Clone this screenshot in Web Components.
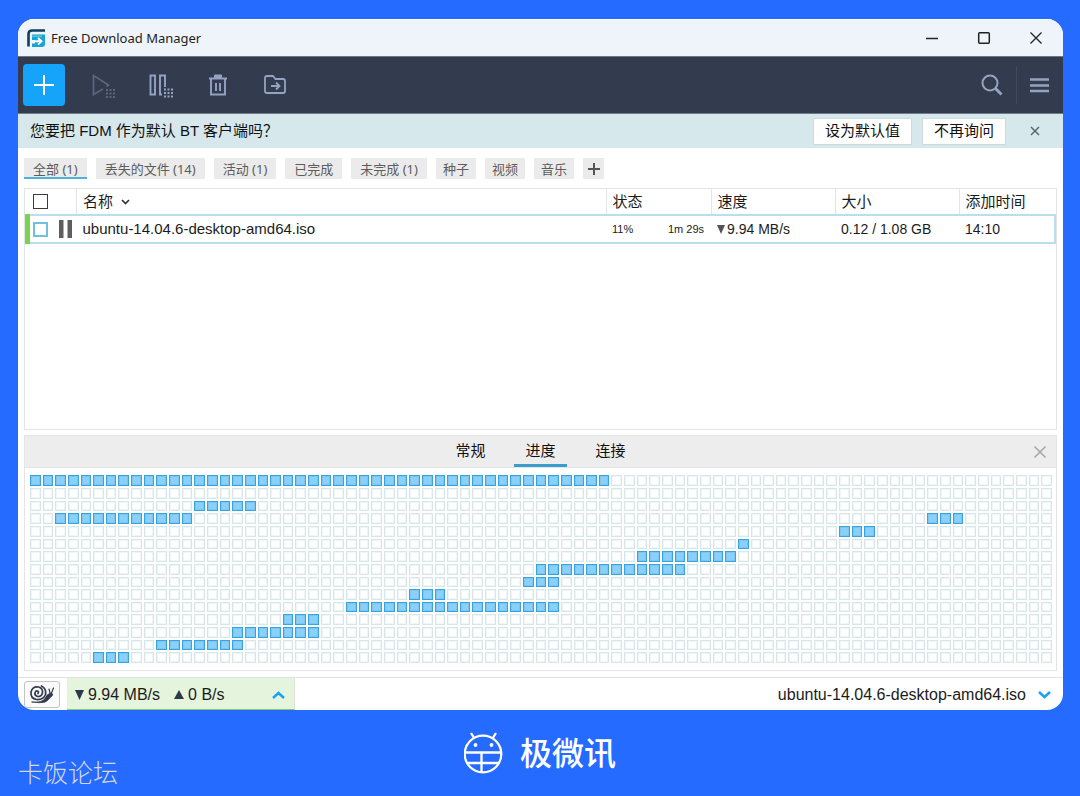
<!DOCTYPE html>
<html lang="zh-CN">
<head>
<meta charset="utf-8">
<meta name="viewport" content="width=device-width, initial-scale=1">
<title>Free Download Manager</title>
<style>
  html, body { margin: 0; }
  body {
    min-height: 100vh; display: flex; flex-direction: column;
    background: #256bff; color: #1c1c1c;
    font: 15px/20px "Liberation Sans", "Noto Sans CJK SC", sans-serif;
    --navy: #333b4e; --icon: #93a3c1; --accent: #16a4fa; --line: #e2e4e5; --sky: #b9dfee;
  }
</style>
</head>
<body>
<fdm-window>
  <fdm-titlebar>Free Download Manager</fdm-titlebar>
  <fdm-toolbar></fdm-toolbar>
  <fdm-banner>您要把 FDM 作为默认 BT 客户端吗？</fdm-banner>
  <fdm-filters></fdm-filters>
  <fdm-downloads></fdm-downloads>
  <fdm-details><fdm-pieces></fdm-pieces></fdm-details>
  <fdm-statusbar>ubuntu-14.04.6-desktop-amd64.iso</fdm-statusbar>
</fdm-window>
<brand-footer></brand-footer>

<script>
const base = `
  :host, *, ::slotted(*) { box-sizing: border-box; }
  button { font: inherit; color: inherit; border: 0; background: none; padding: 0; margin: 0; }
  button { display: inline-flex; align-items: center; justify-content: center; }
  svg { display: block; flex: none; }
`;
function define(name, html, setup) {
  const template = document.createElement('template');
  template.innerHTML = html.replace('<style>', '<style>' + base);
  customElements.define(name, class extends HTMLElement {
    constructor() {
      super();
      this.attachShadow({ mode: 'open' }).append(template.content.cloneNode(true));
      if (setup) setup(this.shadowRoot);
    }
  });
}

define('fdm-window', `
<style>
  :host { display: flex; flex-direction: column; flex: 1; margin: 19px 17px 0 18px;
    border-radius: 16px; overflow: hidden; background: #fff; }
</style><slot></slot>`);

define('fdm-titlebar', `
<style>
  :host { display: flex; align-items: center; height: 37px; padding: 0 19px 0 9px; background: #eff4fa;
    border-top: 1px solid #fff; font-family: "Noto Sans", "Noto Sans CJK SC", sans-serif; color: #222; }
  .name { margin-left: 5px; flex: 1; font-size: 13px; }
  .controls { display: flex; gap: 36px; }
  button { width: 16px; height: 16px; }
</style>
<svg width="19" height="19" viewBox="0 0 19 19" aria-hidden="true">
  <path d="M1.500 17.500V5Q1.500 1.500 5 1.500H18" fill="none" stroke="#123e5e" stroke-width="2.600"/>
  <path d="M5 5.500h13V15q0 3-3 3H5v-3.500h3V11H5z" fill="#18a4d3"/>
  <path d="M5 7.200h10" stroke="#7fd4ec" stroke-width="1"/>
  <path d="M6 12.300h8M11 9l3.500 3.300L11 15.600" fill="none" stroke="#fff" stroke-width="1.900"/>
</svg>
<span class="name"><slot></slot></span>
<div class="controls">
  <button aria-label="最小化"><svg width="14" height="14" viewBox="0 0 14 14"><path d="M1 7.500h12" stroke="#222" stroke-width="1.500"/></svg></button>
  <button aria-label="最大化"><svg width="14" height="14" viewBox="0 0 14 14"><rect x="1.700" y="1.700" width="10.600" height="10.600" rx="1" fill="none" stroke="#222" stroke-width="1.500"/></svg></button>
  <button aria-label="关闭"><svg width="14" height="14" viewBox="0 0 14 14"><path d="M1.500 1.500l11 11M12.500 1.500l-11 11" stroke="#222" stroke-width="1.300"/></svg></button>
</div>`);

define('fdm-toolbar', `
<style>
  :host { display: flex; align-items: center; height: 58px; padding: 0 9px 0 5px; background: var(--navy); color: var(--icon);
    border-top: 1px solid #6f7786; border-bottom: 1px solid #6f7a8b; }
  .add { width: 42px; height: 42px; border-radius: 4px; background: var(--accent); }
  .actions { display: flex; gap: 29px; margin-left: 25px; flex: 1; }
  .actions button, .end button { width: 28px; height: 28px; }
  .end { display: flex; align-items: center; }
  .rule { width: 1px; height: 38px; margin: 0 9px 0 10px; background: #3e4a60; }
</style>
<button class="add" aria-label="添加下载"><svg width="22" height="22" viewBox="0 0 22 22"><path d="M11 1v20M1 11h20" stroke="#fff" stroke-width="2"/></svg></button>
<div class="actions">
  <button aria-label="开始"><svg width="26" height="28" viewBox="0 0 26 28" opacity=".42">
    <path d="M12 18L2.500 23.500v-19L17.500 14l-2 1.500" fill="none" stroke="currentColor" stroke-width="1.700"/>
    <path d="M15 19h10M15 22.500h10M15 26h10" stroke="currentColor" stroke-width="2" stroke-dasharray="2 1.500"/></svg></button>
  <button aria-label="暂停"><svg width="26" height="28" viewBox="0 0 26 28">
    <path d="M2.500 4.500h4.500v19H2.500zM14 23.500h-2V4.500h5V16" fill="none" stroke="currentColor" stroke-width="1.900"/>
    <path d="M16 18.500h10M16 22h10M16 25.500h10" stroke="currentColor" stroke-width="2" stroke-dasharray="2 1.500"/></svg></button>
  <button aria-label="删除"><svg width="22" height="24" viewBox="0 0 22 24" fill="none" stroke="currentColor" stroke-width="1.900">
    <path d="M2 5.500h18M4 5.500V21.500h14V5.500M9 10v8M13 10v8"/><path d="M7.500 4.500V2h7v2.500z" fill="currentColor" stroke-width="1"/></svg></button>
  <button aria-label="移动到"><svg width="24" height="22" viewBox="0 0 24 22" fill="none" stroke="currentColor" stroke-width="1.800">
    <path d="M4 2h6l2.500 3H20q2 0 2 2v10q0 2-2 2H4q-2 0-2-2V4q0-2 2-2zM8 12h8M13 8.500l3.500 3.500-3.500 3.500"/></svg></button>
</div>
<div class="end">
  <button aria-label="搜索"><svg width="24" height="24" viewBox="0 0 24 24" fill="none" stroke="currentColor"><circle cx="10" cy="10" r="7.500" stroke-width="2"/><path d="M15.500 15.500l6 6" stroke-width="3"/></svg></button>
  <span class="rule"></span>
  <button aria-label="菜单"><svg width="20" height="16" viewBox="0 0 20 16"><path d="M0 2.500h19M0 8.500h19M0 14h19" stroke="currentColor" stroke-width="2.400"/></svg></button>
</div>`);

define('fdm-banner', `
<style>
  :host { display: flex; align-items: center; gap: 12px; min-height: 34px; padding: 0 20px 0 12px; background: #d6e8ec; color: #111; }
  .text { flex: 1; }
  .action { height: 25px; padding: 0 11px; background: #fff; box-shadow: 0 0 0 1px #cbdbde; }
  .close { width: 16px; height: 16px; margin-left: 10px; }
</style>
<span class="text"><slot></slot></span>
<button class="action">设为默认值</button>
<button class="action">不再询问</button>
<button class="close" aria-label="关闭提示"><svg width="10" height="10" viewBox="0 0 10 10"><path d="M1 1l8 8M9 1L1 9" stroke="#5b6468" stroke-width="1.500"/></svg></button>`);

define('fdm-filters', `
<style>
  :host { display: flex; gap: 9px; padding: 10px 6px 9px; color: #5c5c5c;
    font-family: "Noto Sans", "Noto Sans CJK SC", sans-serif; font-size: 13px; line-height: 18px; }
  button { height: 21px; padding: 0 9px; background: #ebebeb; }
  .kind { padding: 0 7px; }
  .on { border-bottom: 2px solid #4fb2dc; padding-top: 2px; }
  .add { width: 21px; padding: 0; }
</style>
<button class="on">全部 (1)</button><button>丢失的文件 (14)</button><button>活动 (1)</button><button>已完成</button><button>未完成 (1)</button>
<button class="kind">种子</button><button class="kind">视频</button><button class="kind">音乐</button>
<button class="add" aria-label="添加标签"><svg width="12" height="12" viewBox="0 0 12 12"><path d="M6 0v12M0 6h12" stroke="#555" stroke-width="2"/></svg></button>`);

define('fdm-downloads', `
<style>
  :host { display: block; flex: 1; margin: 0 6px 5px; border: 1px solid var(--line); }
  table { width: 100%; border-collapse: collapse; table-layout: fixed; }
  th, td { padding: 0 0 0 6px; font-weight: 400; text-align: left; white-space: nowrap; }
  th { height: 26px; border-left: 1px solid var(--line); }
  .pick { width: 49px; } .status { width: 105px; } .speed { width: 124px; } .size { width: 124px; } .added { width: 96px; }
  td { height: 28px; font-size: 14px; border-top: 2px solid var(--sky); border-bottom: 2px solid var(--sky); }
  td:last-child { border-right: 2px solid var(--sky); }
  td:first-child { border-left: 5px solid #79d254; padding-left: 3px; }
  th:first-child { border-left: 0; padding-left: 5px; }
  .name { font-size: 15px; }
  .cell { display: flex; align-items: center; }
  .small { font-size: 11px; justify-content: space-between; padding-right: 7px; }
  input { appearance: none; width: 15px; height: 15px; margin: 0; border: 1px solid #3c3c3c; background: #fff; }
  td input { border: 2px solid #6fbfdf; }
  .pick .cell { gap: 11px; }
  .sort { gap: 8px; }
  .down { gap: 2px; }
</style>
<table>
  <thead><tr>
    <th class="pick"><div class="cell"><input type="checkbox" aria-label="全选"></div></th>
    <th><div class="cell sort">名称<svg width="9" height="6" viewBox="0 0 9 6" aria-hidden="true"><path d="M1 1l3.500 3.500L8 1" fill="none" stroke="#333" stroke-width="1.700"/></svg></div></th>
    <th class="status">状态</th><th class="speed">速度</th><th class="size">大小</th><th class="added">添加时间</th>
  </tr></thead>
  <tbody><tr>
    <td class="pick"><div class="cell"><input type="checkbox" aria-label="选择 ubuntu-14.04.6-desktop-amd64.iso"><svg width="13" height="18" viewBox="0 0 13 18" aria-hidden="true"><path d="M0 0h4.500v18H0zM8.500 0H13v18H8.500z" fill="#5e5e5e"/></svg></div></td>
    <td class="name">ubuntu-14.04.6-desktop-amd64.iso</td>
    <td><div class="cell small"><span>11%</span><span>1m 29s</span></div></td>
    <td><div class="cell down"><svg width="8" height="9" viewBox="0 0 8 9" aria-hidden="true"><path d="M0 0h8L4 9z" fill="#555"/></svg>9.94 MB/s</div></td>
    <td>0.12 / 1.08 GB</td>
    <td>14:10</td>
  </tr></tbody>
</table>`);

define('fdm-details', `
<style>
  :host { display: block; margin: 0 6px 6px; border: 1px solid var(--line); }
  header { display: grid; grid-template-columns: 1fr auto 1fr; height: 32px; background: #ededed; border-bottom: 1px solid var(--line); }
  nav { grid-column: 2; display: flex; gap: 17px; color: #111; }
  nav button { width: 53px; border-top: 2px solid transparent; border-bottom: 3px solid transparent; }
  nav .on { border-bottom-color: #3b9dc9; }
  .close { justify-self: end; width: 32px; }
</style>
<header>
  <nav><button>常规</button><button class="on">进度</button><button>连接</button></nav>
  <button class="close" aria-label="关闭面板"><svg width="12" height="12" viewBox="0 0 12 12"><path d="M.5.500l11 11M11.500.500l-11 11" stroke="#a5a5a5" stroke-width="1.500"/></svg></button>
</header>
<slot></slot>`);

define('fdm-pieces', `
<style>
  :host { display: grid; grid-template-columns: repeat(81, 1fr); gap: 2px; padding: 7px 5px 7px 5px; }
  i { aspect-ratio: 1; border: 1px solid #d9e6e9; box-shadow: inset 0 0 0 1px #eff6f7; }
  .done { background: #8bcffb; border-color: #35a5e2; box-shadow: inset 0 0 0 1px #7cc6f4; }
</style>`, root => {
  // Downloaded ranges per row, as inclusive [first, last] columns.
  const done = [[[0, 45]], [], [[13, 17]], [[2, 12], [71, 73]], [[64, 66]], [[56, 56]], [[48, 55]], [[40, 51]],
    [[39, 41]], [[30, 32]], [[25, 41]], [[20, 22]], [[16, 22]], [[10, 16]], [[5, 7]]];
  for (const ranges of done) {
    for (let col = 0; col < 81; col++) {
      const cell = document.createElement('i');
      if (ranges.some(([a, b]) => col >= a && col <= b)) cell.className = 'done';
      root.append(cell);
    }
  }
});

define('fdm-statusbar', `
<style>
  :host { display: flex; align-items: stretch; height: 33px; padding: 0 12px 0 6px; border-top: 1px solid #dfe1e2; font-size: 16px; }
  .snail { align-self: center; width: 36px; height: 27px; margin-right: 7px; border: 1px solid #c4c4c4; border-radius: 3px; background: #fbfbfb; }
  .speed { display: flex; align-items: center; width: 228px; padding: 2px 8px 0; background: #e5f4dc; border-bottom: 1px solid #86cc66; border-right: 1px solid #dce3d8; gap: 4px; }
  .up { margin-left: 10px; }
  .speed button { margin-left: auto; width: 16px; height: 16px; }
  .file { margin-left: auto; padding-top: 2px; display: flex; align-items: center; gap: 12px; }
</style>
<button class="snail" aria-label="限速模式"><svg width="26" height="20" viewBox="0 0 26 20" fill="none" stroke="#333b4e" stroke-linecap="round">
  <path d="M9 9.500q1-1.500 0-2.300-2-.9-3 1.300-.7 3 2.500 4 4 .3 5-3.500.4-5-4-6-6-.8-7.500 5-.6 6.500 5.500 7.500 7 .5 9-5 1-6-4-8.500" stroke-width="1.700"/>
  <path d="M3 18q10 1 13-3.500 2-5 6-5.500 3 1 1 3-2 1-3.500 3.500Q17 19 11 18.700z" fill="#333b4e" stroke-width=".8"/>
  <path d="M22.500 9l2-5M21 9l-1-4" stroke-width="1.200"/></svg></button>
<div class="speed">
  <svg width="9" height="10" viewBox="0 0 9 10" aria-hidden="true"><path d="M0 0h9L4.500 10z" fill="#2e3a4a"/></svg><span>9.94 MB/s</span>
  <svg class="up" width="10" height="9" viewBox="0 0 10 9" aria-hidden="true"><path d="M0 9h10L5 0z" fill="#2e3a4a"/></svg><span>0 B/s</span>
  <button aria-label="展开速度"><svg width="13" height="8" viewBox="0 0 13 8"><path d="M1 7l5.500-5L12 7" fill="none" stroke="#16a4fa" stroke-width="2.500"/></svg></button>
</div>
<div class="file"><slot></slot><button aria-label="收起面板"><svg width="13" height="8" viewBox="0 0 13 8"><path d="M1 1l5.500 5L12 1" fill="none" stroke="#16a4fa" stroke-width="2.500"/></svg></button></div>`);

define('brand-footer', `
<style>
  :host { display: grid; grid-template-columns: 1fr auto 1fr; height: 86px; padding: 0 18px; color: #fff; }
  .mark { align-self: end; margin-bottom: 5px; font-size: 25px; line-height: 36px; font-weight: 300; color: #d3d8e4; }
  .brand { display: flex; align-items: center; gap: 16px; padding-top: 2px; font-size: 32px; line-height: 40px; font-weight: 500; }
</style>
<span class="mark">卡饭论坛</span>
<div class="brand">
  <svg width="40" height="44" viewBox="0 0 40 44" fill="none" stroke="#fff" stroke-width="2.300">
    <circle cx="19" cy="22" r="18.300"/><path d="M10.500 6.500L7 1M28.500 6.500L32 1M1 20.500h36.500M4 31h31M17.500 20.500V40"/>
    <circle cx="11.500" cy="13" r="1.900" fill="#fff" stroke="none"/><circle cx="27.500" cy="13" r="1.900" fill="#fff" stroke="none"/></svg>
  <span>极微讯</span>
</div>`);
</script>
</body>
</html>
